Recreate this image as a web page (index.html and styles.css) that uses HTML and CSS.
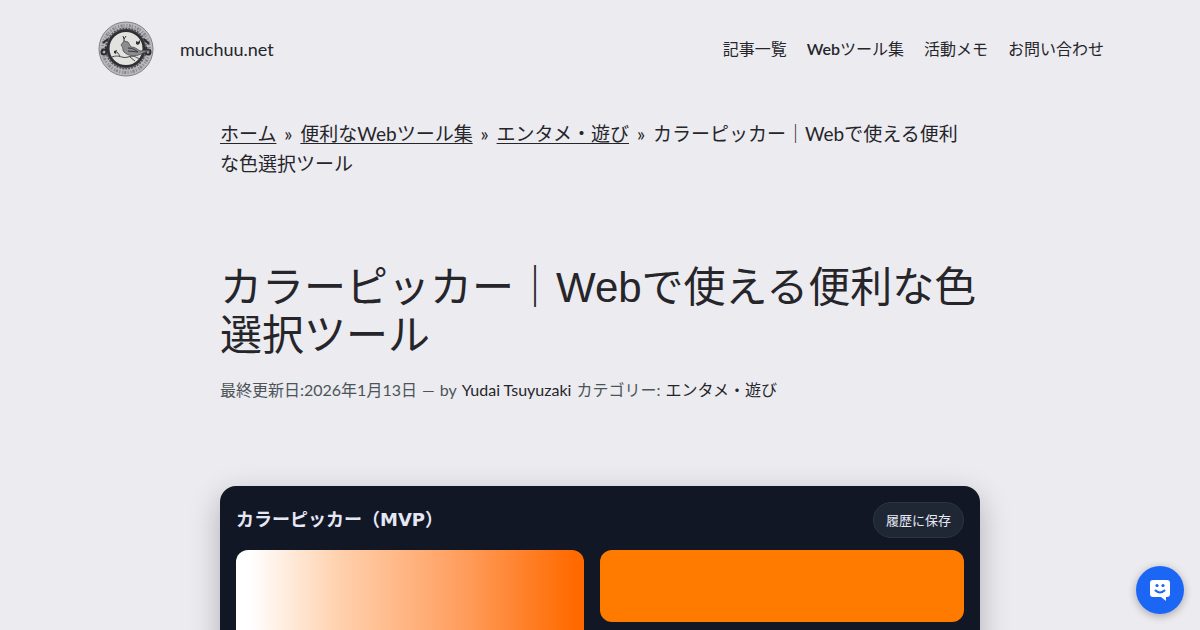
FILE: index.html
```
<!DOCTYPE html>
<html lang="ja">
<head>
    <meta charset="UTF-8">
    <meta name="viewport" content="width=device-width, initial-scale=1.0">
    <title>カラーピッカー｜Webで使える便利な色選択ツール</title>
    <link rel="stylesheet" href="styles.css">
</head>
<body>

    <header class="site-header">
        <a class="brand" href="#">
            <svg class="logo" viewBox="0 0 60 60" aria-hidden="true">
                <circle cx="30" cy="30" r="27" fill="#b9b9be" stroke="#808085"/>
                <circle cx="30" cy="30" r="23.500" fill="none" stroke="#85858a" stroke-width="3" stroke-dasharray="1 1.500 2 1 1 2"/>
                <circle cx="30" cy="29.500" r="18" fill="#e2e2de" stroke="#303034" stroke-width="3"/>
                <circle cx="30" cy="29.500" r="20" fill="none" stroke="#55555a" stroke-width="2" stroke-dasharray="2 1"/>
                <g fill="none" stroke="#2b2b2f" stroke-width="2">
                    <circle cx="8" cy="33" r="2.500"/>
                    <circle cx="52" cy="33" r="2.500"/>
                    <path d="M7 24l5-4M48 20l5 5M9 28l2 2M51 28l-2 2"/>
                </g>
                <path d="M16 38c7-3 10 2 16 0s7 0 12 2M24 37l-3-4M34 38l5 4" fill="none" stroke="#46464a"/>
                <path d="M25 26l3-4 4 1 3 5c4 0 6 2 9 4l10-1-9 4c-6 3-13 2-17-2-2-2 0-4-3-7z" fill="#8d8d91" stroke="#4b4b50" stroke-width=".8"/>
                <path d="M32 29c5 0 7 2 10 4M32 32l10 1" fill="none" stroke="#37373b"/>
                <path d="M40 22l2 1 2-2v3l-2 2-2-1zM18 32l3-1-1 4-2-1z" fill="#333337"/>
                <path d="M27 17l1 3 2-3M28 20v2" fill="none" stroke="#333337"/>
            </svg>
            <span>muchuu.net</span>
        </a>
        <nav class="site-nav">
            <a href="#">記事一覧</a>
            <a href="#"><b>Web</b>ツール集</a>
            <a href="#">活動メモ</a>
            <a href="#">お問い合わせ</a>
        </nav>
    </header>

    <main class="content">
        <nav class="breadcrumb">
            <a href="#">ホーム</a>
            <span class="sep">»</span>
            <a href="#">便利なWebツール集</a>
            <span class="sep">»</span>
            <a href="#">エンタメ・遊び</a>
            <span class="sep">»</span>
            <span>カラーピッカー｜Webで使える便利な色選択ツール</span>
        </nav>

        <h1>カラーピッカー｜Webで使える便利な色選択ツール</h1>
        <div class="post-meta">
            <span>最終更新日:2026年1月13日</span>
            <span>—</span>
            <span>by</span>
            <a href="#">Yudai Tsuyuzaki</a>
            <span>カテゴリー:</span>
            <a href="#">エンタメ・遊び</a>
        </div>

        <section class="picker">
            <div class="picker-head">
                <h2>カラーピッカー（MVP）</h2>
                <button class="save" type="button">履歴に保存</button>
            </div>
            <div class="picker-body">
                <div class="sv-area"></div>
                <div class="preview"></div>
            </div>
        </section>
    </main>

    <button class="chat" type="button" aria-label="チャット">
        <svg viewBox="0 0 24 24" aria-hidden="true">
            <path d="M5 2h14a3 3 0 0 1 3 3v11a3 3 0 0 1-3 3h-1v4l-5-4H5a3 3 0 0 1-3-3V5a3 3 0 0 1 3-3z" fill="#fff"/>
            <circle cx="9" cy="7.500" r="1.600" fill="#1b66f5"/>
            <circle cx="15" cy="7.500" r="1.600" fill="#1b66f5"/>
            <path d="M7.500 12.500q4.500 4 9 0" fill="none" stroke="#1b66f5" stroke-width="2" stroke-linecap="round"/>
        </svg>
    </button>

</body>
</html>
```
FILE: styles.css
```
* {
    box-sizing: border-box;
}
html {
    overflow-x: hidden;
}
body {
    margin: 0;
    font-family: Lato, "Noto Sans CJK JP", sans-serif;
    font-size: 19px;
    line-height: 30px;
    background-color: #ebebf0;
    color: #25252a;
}
a {
    color: inherit;
}
.site-header {
    display: flex;
    justify-content: space-between;
    align-items: center;
    padding: 19px 96px;
}
.brand {
    display: flex;
    align-items: center;
    gap: 24px;
    font-size: 18px;
    text-decoration: none;
}
.logo {
    width: 60px;
    height: 60px;
}
.site-nav {
    display: flex;
    gap: 20px;
    font-size: 16px;
}
.site-nav a {
    text-decoration: none;
}
.site-nav b {
    font-weight: 600;
}
.content {
    max-width: 760px;
    margin: 21px auto 0;
}
.breadcrumb {
    padding-right: 16px;
}
.breadcrumb a {
    text-underline-offset: 2px;
}
.sep {
    margin: 0 3px;
}
h1 {
    margin: 85px 0 0;
    font-family: "Liberation Sans", "Noto Sans CJK JP", sans-serif;
    font-size: 42px;
    font-weight: 400;
    line-height: 48px;
}
.post-meta {
    display: flex;
    gap: 5px;
    margin-top: 15px;
    font-size: 16px;
    color: #4b5559;
}
.post-meta a {
    color: #25252a;
    text-decoration: none;
}
.picker {
    margin-top: 81px;
    padding: 16px;
    border-radius: 16px;
    background-color: #111725;
    color: #e5e7f5;
    box-shadow: 0 10px 30px rgba(0, 0, 0, 0.25);
}
.picker-head {
    display: flex;
    justify-content: space-between;
    align-items: center;
    margin-bottom: 12px;
}
h2 {
    margin: 0;
    font-family: "DejaVu Sans", "Noto Sans CJK JP", sans-serif;
    font-size: 18px;
    font-weight: 700;
}
.save {
    height: 36px;
    padding: 0 12px 2px;
    border: 1px solid #2d3542;
    border-radius: 18px;
    background-color: #1f2735;
    color: #e5e7f5;
    font-family: "Noto Sans CJK JP", sans-serif;
    font-size: 13px;
}
.picker-body {
    display: grid;
    grid-template-columns: 348px 1fr;
    align-items: start;
    gap: 16px;
}
.sv-area {
    height: 260px;
    border-radius: 12px;
    background: linear-gradient(to right, #fff 4%, #ffd0ac 30%, #ff9c5b 66%, #ff6a00 97%);
}
.preview {
    height: 72px;
    border-radius: 12px;
    background-color: #ff7b00;
}
.chat {
    position: fixed;
    right: 16px;
    bottom: 16px;
    display: flex;
    align-items: center;
    justify-content: center;
    width: 48px;
    height: 48px;
    padding: 0;
    border: 0;
    border-radius: 50%;
    background-color: #1b66f5;
    box-shadow: 0 2px 8px rgba(0, 0, 0, 0.3);
}
.chat svg {
    width: 24px;
    height: 24px;
}
```
